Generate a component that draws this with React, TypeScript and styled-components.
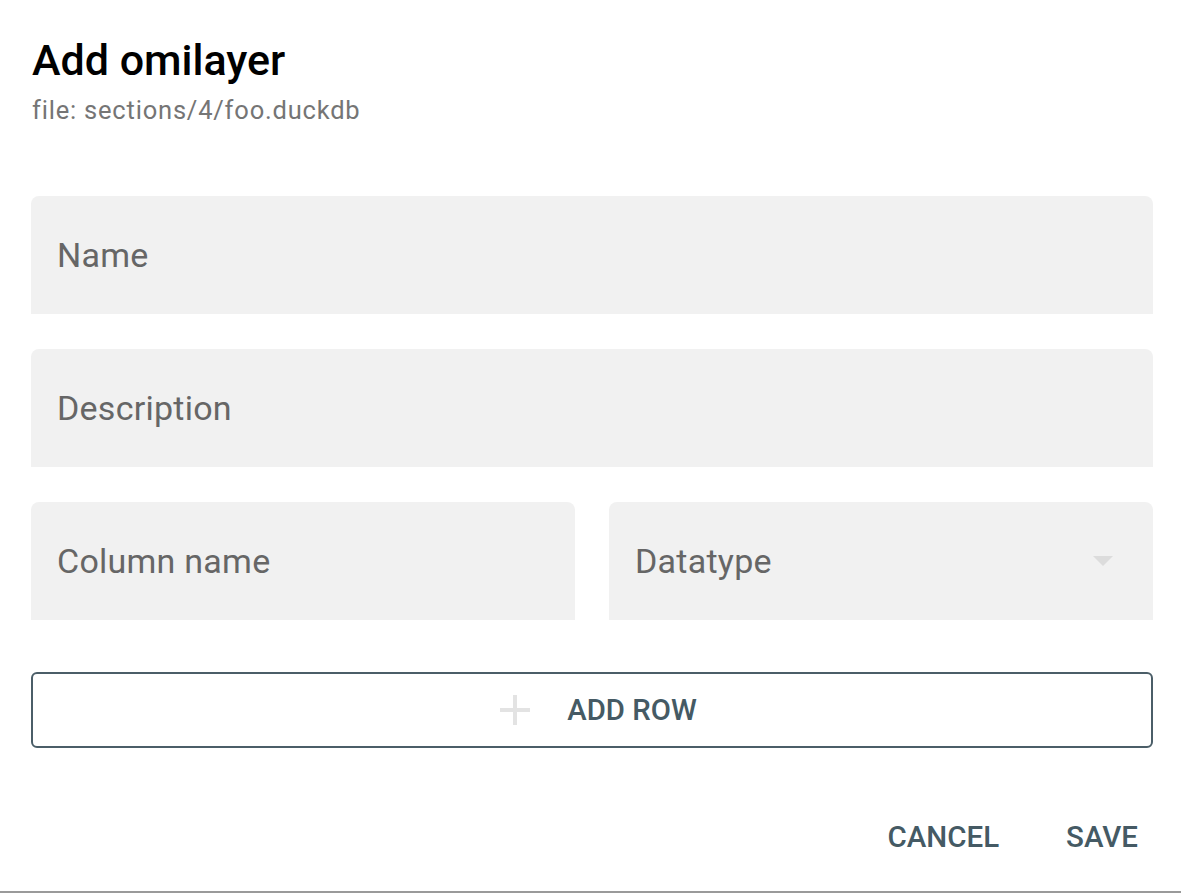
import React from "react";
import styled, { createGlobalStyle } from "styled-components";

const Global = createGlobalStyle`
  html, body { margin: 0; padding: 0; background: #ffffff; }
  body { font-family: Roboto, "Noto Sans", Arial, sans-serif; }
  * { box-sizing: border-box; }
`;

const Dialog = styled.div`
  width: 1181px;
  height: 893px;
  background: #fff;
  border-bottom: 2px solid #9a9a9a;
  display: flex;
  flex-direction: column;
  padding: 0 28px 0 31px;
`;

const Header = styled.div`
  padding: 34px 0 0 1px;
  display: flex;
  flex-direction: column;
`;

const Title = styled.h2`
  margin: 0;
  font-size: 43px;
  line-height: 52px;
  font-weight: 500;
  color: #000;
`;

const Subtitle = styled.div`
  margin-top: 9px;
  font-size: 25.5px;
  line-height: 30px;
  color: #757575;
  letter-spacing: 0.8px;
`;

const Form = styled.div`
  margin-top: 71px;
  display: flex;
  flex-direction: column;
  gap: 35px;
  width: 1122px;
`;

const Row = styled.div`
  display: grid;
  grid-template-columns: 1fr 1fr;
  gap: 34px;
`;

const Field = styled.div`
  position: relative;
  height: 118px;
  background: #f1f1f1;
  border-radius: 8px 8px 0 0;
  display: flex;
  align-items: center;
  padding: 0 26px;
`;

const Label = styled.span`
  font-size: 34px;
  color: #666666;
  letter-spacing: 0.25px;
`;

const Arrow = styled.span`
  position: absolute;
  right: 40px;
  top: 54px;
  width: 0;
  height: 0;
  border-left: 10px solid transparent;
  border-right: 10px solid transparent;
  border-top: 10px solid #dcdcdc;
`;

const AddRowButton = styled.button`
  margin-top: 52px;
  width: 1122px;
  height: 76px;
  border: 2px solid #4b5e68;
  border-radius: 6px;
  background: #fff;
  display: flex;
  align-items: center;
  justify-content: center;
  gap: 36px;
  font-family: inherit;
  font-size: 29.3px;
  font-weight: 500;
  color: #455a64;
  padding: 0 0 0 12px;
  cursor: pointer;
`;

const Actions = styled.div`
  margin-top: 71px;
  display: flex;
  justify-content: flex-end;
  gap: 67px;
  padding-right: 15px;
`;

const TextButton = styled.button`
  border: none;
  background: none;
  padding: 0;
  font-family: inherit;
  font-size: 29.5px;
  font-weight: 500;
  color: #455a64;
  line-height: 36px;
  cursor: pointer;
`;

const PlusIcon = () => (
  <svg width="32" height="32" viewBox="0 0 32 32">
    <path d="M16 1v30M1 16h30" stroke="#e3e3e3" strokeWidth="4" fill="none" />
  </svg>
);

export default function App() {
  return (
    <>
      <Global />
      <Dialog>
        <Header>
          <Title>Add omilayer</Title>
          <Subtitle>file: sections/4/foo.duckdb</Subtitle>
        </Header>
        <Form>
          <Field>
            <Label>Name</Label>
          </Field>
          <Field>
            <Label>Description</Label>
          </Field>
          <Row>
            <Field>
              <Label>Column name</Label>
            </Field>
            <Field>
              <Label>Datatype</Label>
              <Arrow />
            </Field>
          </Row>
        </Form>
        <AddRowButton>
          <PlusIcon />
          <span>ADD ROW</span>
        </AddRowButton>
        <Actions>
          <TextButton>CANCEL</TextButton>
          <TextButton>SAVE</TextButton>
        </Actions>
      </Dialog>
    </>
  );
}
